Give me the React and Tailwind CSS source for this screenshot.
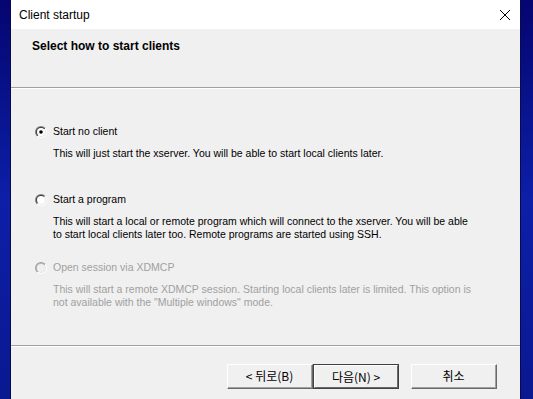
import React from 'react';

const Radio = ({ checked, disabled, id }) => (
  <svg width="12" height="12" viewBox="0 0 12 12" className="shrink-0">
    <defs>
      <linearGradient id={`o${id}`} x1="0" y1="0" x2="1" y2="1">
        <stop offset="0.5" stopColor={disabled ? '#a0a0a0' : '#808080'} />
        <stop offset="0.5" stopColor="#ffffff" />
      </linearGradient>
      <linearGradient id={`i${id}`} x1="0" y1="0" x2="1" y2="1">
        <stop offset="0.5" stopColor={disabled ? '#b8b8b8' : '#404040'} />
        <stop offset="0.5" stopColor="#e3e3e3" />
      </linearGradient>
    </defs>
    <circle cx="6" cy="6" r="6" fill={`url(#o${id})`} />
    <circle cx="6" cy="6" r="5" fill={`url(#i${id})`} />
    <circle cx="6" cy="6" r="4" fill={disabled ? '#f0f0f0' : '#ffffff'} />
    {checked && <circle cx="6" cy="6" r="1.8" fill="#000000" />}
  </svg>
);

const Option = ({ id, label, lines, checked, disabled }) => (
  <div className="h-[68px] flex flex-col">
    <div className={`h-[13px] flex items-center gap-[6px] ${disabled ? 'text-[#a0a0a0]' : 'text-black'}`}>
      <Radio id={id} checked={checked} disabled={disabled} />
      <span>{label}</span>
    </div>
    <div className={`mt-[9px] pl-[18px] leading-[13px] ${disabled ? 'text-[#a0a0a0]' : 'text-black'}`}>
      {lines.map((l, i) => (
        <div key={i} className="whitespace-nowrap">{l}</div>
      ))}
    </div>
  </div>
);

const Button = ({ children, primary }) => (
  <button
    className={`w-[86px] h-[25px] bg-[#f0f0f0] flex items-center justify-center text-[12px] text-black ${
      primary ? 'border border-[#404040]' : 'border border-t-white border-l-white border-b-[#696969] border-r-[#696969]'
    }`}
    style={{ fontFamily: '"Noto Sans CJK KR", "Liberation Sans", sans-serif' }}
  >
    <span
      className={`w-full h-full flex items-center justify-center ${
        primary ? 'border border-t-white border-l-white border-b-[#696969] border-r-[#696969]' : 'border-b border-r border-[#a0a0a0] border-t-0 border-l-0'
      }`}
    >
      {children}
    </span>
  </button>
);

export default function App() {
  return (
    <div
      className="w-[533px] h-[399px] flex bg-gradient-to-b from-[#050570] via-[#0d1fa8] to-[#0a1890] overflow-hidden"
      style={{ fontFamily: '"Liberation Sans", Arial, sans-serif' }}
    >
      <div className="w-[11px] shrink-0 border-r border-[#0a0a4a]" />
      <div className="w-[509px] shrink-0 flex flex-col bg-[#f0f0f0]">
        <div className="h-[29px] bg-white flex items-center justify-between pl-[8px] pr-[9px]">
          <span className="text-[12px] text-black">Client startup</span>
          <svg width="12" height="12" viewBox="0 0 12 12">
            <path d="M1 1 L11 11 M11 1 L1 11" stroke="#000" strokeWidth="1" />
          </svg>
        </div>
        <div className="h-[58px] pl-[21px] pt-[10px]">
          <div className="text-[12px] font-bold text-black leading-[14px]">Select how to start clients</div>
        </div>
        <div className="h-[1px] bg-[#a0a0a0]" />
        <div className="h-[1px] bg-white" />
        <div className="h-[256px] pl-[24px] pt-[36px] text-[10.5px]">
          <Option
            id="a"
            checked
            label="Start no client"
            lines={['This will just start the xserver. You will be able to start local clients later.']}
          />
          <Option
            id="b"
            label="Start a program"
            lines={[
              'This will start a local or remote program which will connect to the xserver. You will be able',
              'to start local clients later too. Remote programs are started using SSH.',
            ]}
          />
          <Option
            id="c"
            disabled
            label="Open session via XDMCP"
            lines={[
              'This will start a remote XDMCP session. Starting local clients later is limited. This option is',
              'not available with the "Multiple windows" mode.',
            ]}
          />
        </div>
        <div className="h-[1px] bg-[#a0a0a0]" />
        <div className="h-[1px] bg-white" />
        <div className="flex-1 flex items-start pt-[17px] pl-[216px]">
          <Button>&lt; 뒤로(B)</Button>
          <Button primary>다음(N) &gt;</Button>
          <div className="w-[12px]" />
          <Button>취소</Button>
        </div>
      </div>
      <div className="flex-1 border-l border-[#0a0a4a]" />
    </div>
  );
}
